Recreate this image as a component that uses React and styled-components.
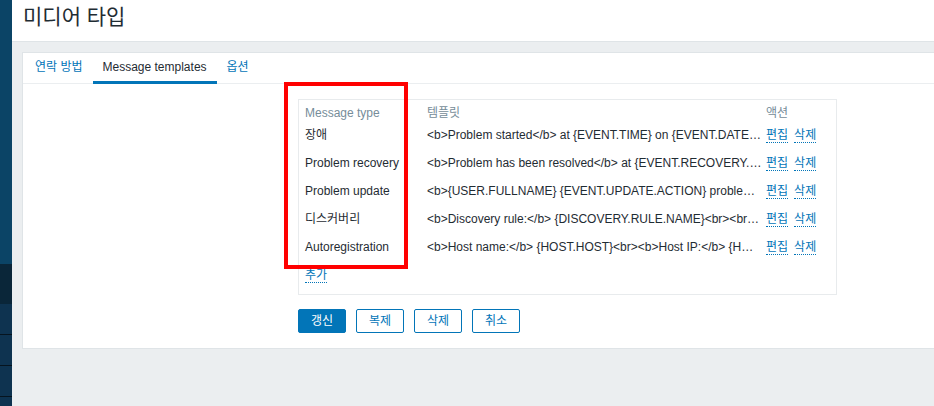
import React from 'react';
import styled, { createGlobalStyle } from 'styled-components';

const GlobalStyle = createGlobalStyle`
  html, body { margin: 0; padding: 0; }
  body {
    background: #ebeef0;
    font-family: "Liberation Sans", Arial, "Noto Sans CJK KR", sans-serif;
    font-size: 12px;
    color: #1f2c33;
    overflow: hidden;
  }
`;

const Page = styled.div`
  position: relative;
  display: flex;
  height: 406px;
  overflow: hidden;
`;

const Sidebar = styled.nav`
  flex: none;
  width: 12px;
  display: flex;
  flex-direction: column;
  background: #0e3350;
`;

const SideBlock = styled.div`
  flex: none;
  box-sizing: border-box;
  height: ${p => p.$h}px;
  background: ${p => p.$bg};
  border-bottom: ${p => (p.$line ? '1px solid #06141f' : 'none')};
`;

const Main = styled.main`
  flex: 1;
  min-width: 0;
  display: flex;
  flex-direction: column;
`;

const Header = styled.header`
  box-sizing: border-box;
  height: 42px;
  background: #fff;
  border-bottom: 1px solid #dfe4e7;
  padding: 3px 0 0 11px;
`;

const Title = styled.h1`
  margin: 0;
  font-size: 21px;
  font-weight: normal;
  line-height: 28px;
  color: #1f2c33;
`;

const Card = styled.section`
  margin: 10px 0 0 10px;
  background: #fff;
  border: 1px solid #dfe4e7;
  border-right: none;
  padding-bottom: 15px;
`;

const TabBar = styled.ul`
  display: flex;
  margin: 0;
  padding: 0 0 0 2px;
  list-style: none;
  border-bottom: 1px solid #ebeef0;
`;

const Tab = styled.li`
  box-sizing: border-box;
  height: 31px;
  margin-bottom: -1px;
  padding: 1px 10px 0;
  line-height: 27px;
  color: ${p => (p.$active ? '#1f2c33' : '#0275b8')};
  border-bottom: 3px solid ${p => (p.$active ? '#0275b8' : 'transparent')};
`;

const FormBody = styled.div`
  padding: 15px 0 0 275px;
`;

const TemplatesBox = styled.div`
  box-sizing: border-box;
  width: 539px;
  border: 1px solid #e8ebed;
  padding: 0 6px 5px;
  display: grid;
  grid-template-columns: 118px 335px auto;
  column-gap: 4px;
`;

const HeadCell = styled.div`
  height: 21px;
  padding-top: 6px;
  box-sizing: border-box;
  line-height: 14px;
  color: #768d99;
`;

const Cell = styled.div`
  height: 28px;
  display: flex;
  align-items: center;
  line-height: 14px;
  min-width: 0;
  gap: 6px;
`;

const Ellipsis = styled.span`
  display: block;
  white-space: nowrap;
  overflow: hidden;
  text-overflow: ellipsis;
  width: 100%;
`;

const Link = styled.a`
  flex: none;
  color: #0275b8;
  text-decoration: none;
  border-bottom: 1px dotted #0275b8;
  line-height: 14px;
  cursor: pointer;
`;

const Buttons = styled.div`
  display: flex;
  gap: 10px;
  margin-top: 14px;
`;

const Button = styled.button`
  box-sizing: border-box;
  height: 24px;
  min-width: 48px;
  padding: 0 11px;
  border-radius: 2px;
  border: 1px solid #0275b8;
  background: ${p => (p.$primary ? '#0275b8' : '#fff')};
  color: ${p => (p.$primary ? '#fff' : '#0275b8')};
  font-family: inherit;
  font-size: 12px;
  line-height: 22px;
  cursor: pointer;
`;

const Highlight = styled.div`
  position: absolute;
  left: 284px;
  top: 82px;
  width: 124px;
  height: 187px;
  box-sizing: border-box;
  border: 4px solid #ff0000;
  pointer-events: none;
`;

const rows = [
  ['장애', '<b>Problem started</b> at {EVENT.TIME} on {EVENT.DATE}<br><b>Problem name:</b> {EVENT.NAME}<br><b>Host:</b> {HOST.NAME}'],
  ['Problem recovery', '<b>Problem has been resolved</b> at {EVENT.RECOVERY.TIME} on {EVENT.RECOVERY.DATE}<br>'],
  ['Problem update', '<b>{USER.FULLNAME} {EVENT.UPDATE.ACTION} problem</b> at {EVENT.UPDATE.DATE} {EVENT.UPDATE.TIME}.<br>'],
  ['디스커버리', '<b>Discovery rule:</b> {DISCOVERY.RULE.NAME}<br><br><b>Device IP:</b> {DISCOVERY.DEVICE.IPADDRESS}'],
  ['Autoregistration', '<b>Host name:</b> {HOST.HOST}<br><b>Host IP:</b> {HOST.IP}<br><b>Agent port:</b> {HOST.PORT}'],
];

export default function App() {
  return (
    <>
      <GlobalStyle />
      <Page>
        <Sidebar>
          <SideBlock $h={264} $bg="#0b4466" />
          <SideBlock $h={40} $bg="#0a2639" />
          <SideBlock $h={31} $bg="#0e3350" $line />
          <SideBlock $h={31} $bg="#0e3350" $line />
          <SideBlock $h={31} $bg="#0e3350" $line />
        </Sidebar>
        <Main>
          <Header>
            <Title>미디어 타입</Title>
          </Header>
          <Card>
            <TabBar>
              <Tab>연락 방법</Tab>
              <Tab $active>Message templates</Tab>
              <Tab>옵션</Tab>
            </TabBar>
            <FormBody>
              <TemplatesBox>
                <HeadCell>Message type</HeadCell>
                <HeadCell>템플릿</HeadCell>
                <HeadCell>액션</HeadCell>
                {rows.map(([type, tpl]) => (
                  <React.Fragment key={type}>
                    <Cell>{type}</Cell>
                    <Cell><Ellipsis>{tpl}</Ellipsis></Cell>
                    <Cell>
                      <Link>편집</Link>
                      <Link>삭제</Link>
                    </Cell>
                  </React.Fragment>
                ))}
                <Cell><Link>추가</Link></Cell>
              </TemplatesBox>
              <Buttons>
                <Button $primary>갱신</Button>
                <Button>복제</Button>
                <Button>삭제</Button>
                <Button>취소</Button>
              </Buttons>
            </FormBody>
          </Card>
        </Main>
        <Highlight />
      </Page>
    </>
  );
}
